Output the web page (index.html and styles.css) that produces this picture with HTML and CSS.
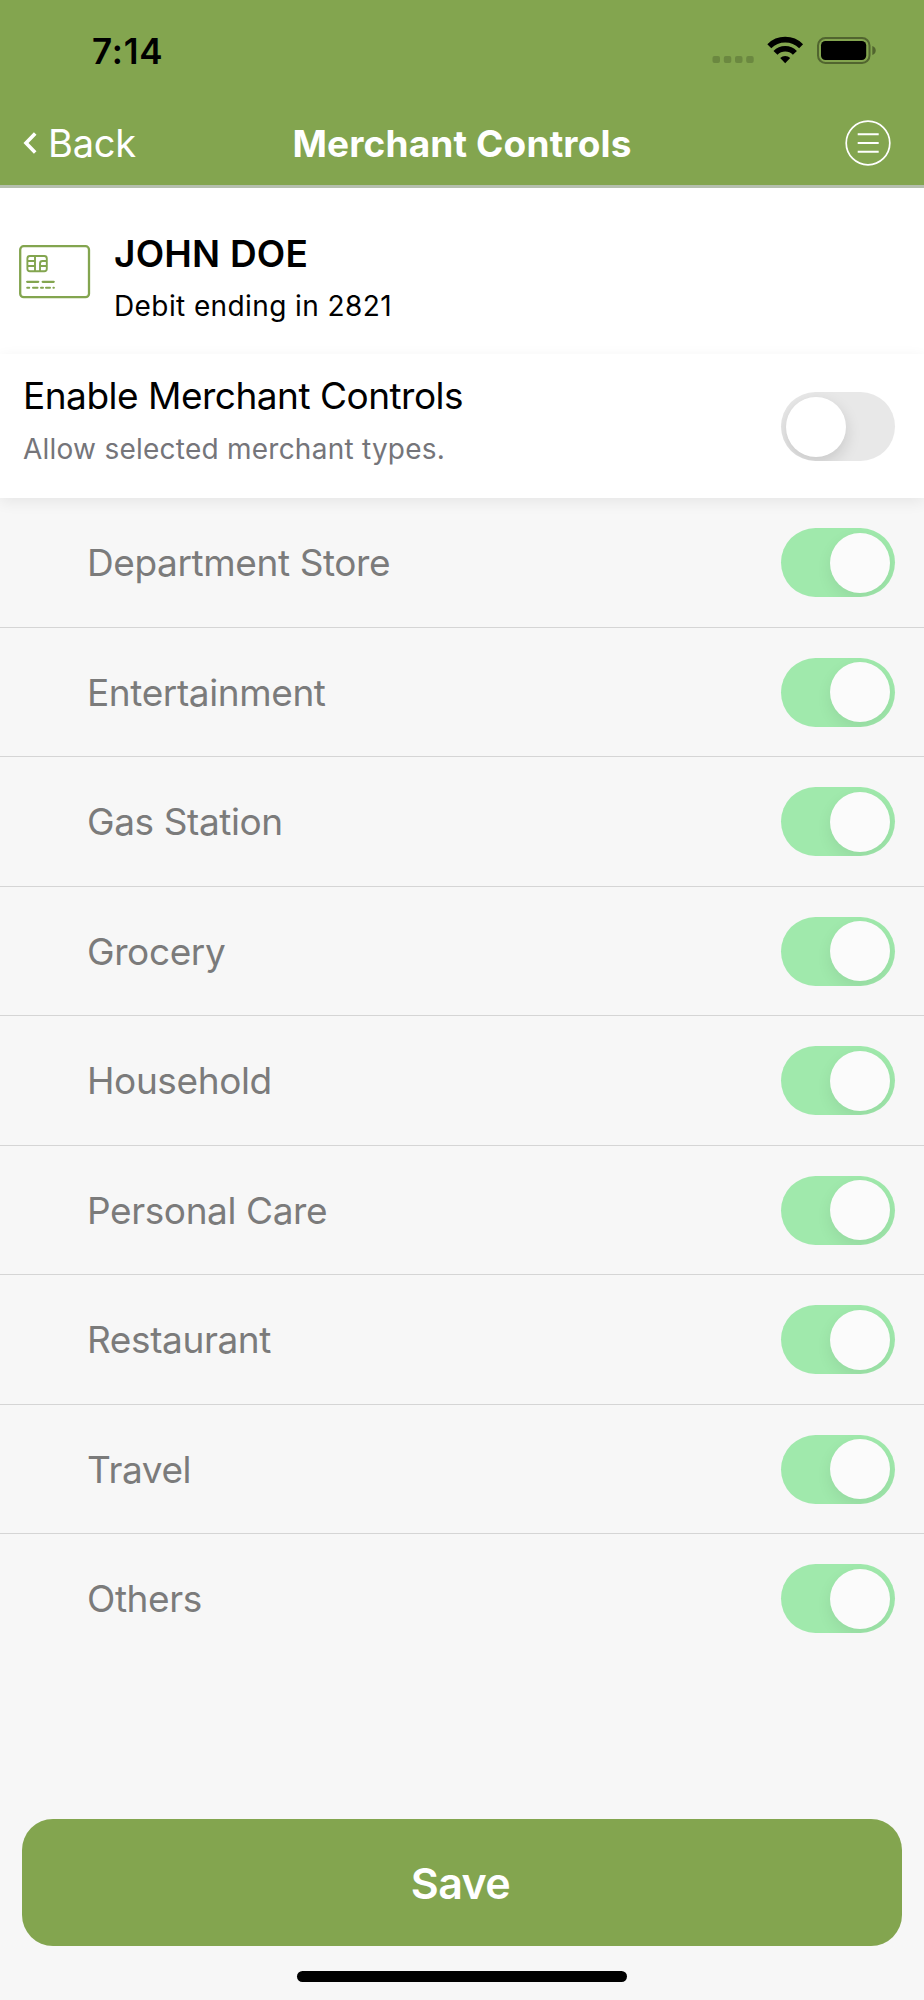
FILE: index.html
```
<!DOCTYPE html>
<html lang="en">
<head>
    <meta charset="UTF-8">
    <title>Merchant Controls</title>
    <link rel="stylesheet" href="styles.css">
</head>
<body>
<header class="header">
    <div class="status-bar">
        <span class="time">7:14</span>
        <svg class="status-icons" width="166" height="30" viewBox="710 35 166 30">
            <g fill="#6b8840">
                <rect x="712.5" y="56" width="7.5" height="7" rx="2"/>
                <rect x="723.8" y="56" width="7.5" height="7" rx="2"/>
                <rect x="735" y="56" width="7.5" height="7" rx="2"/>
                <rect x="746.2" y="56" width="7.5" height="7" rx="2"/>
            </g>
            <g fill="none" stroke="#000" stroke-width="5.6">
                <path d="M769.3 46.2a22.6 22.6 0 0 1 31.8 0"/>
                <path d="M775.5 52.9a13.5 13.5 0 0 1 19.4 0"/>
            </g>
            <path d="M785.2 63.2l-5-5.2a7.2 7.2 0 0 1 10 0z"/>
            <rect x="818" y="38" width="51.5" height="25" rx="7.5" fill="none" stroke="#51652f" stroke-width="2"/>
            <rect x="821" y="41" width="45.2" height="19" rx="4.5"/>
            <path d="M872.3 46q3.4 1.3 3.4 4.5t-3.4 4.5z" fill="#51652f"/>
        </svg>
    </div>
    <div class="nav-bar">
        <a class="back">
            <svg width="14" height="22" viewBox="0 0 14 22"><path d="M12.2 1.5L3 11l9.2 9.5" fill="none" stroke="#fff" stroke-width="3.6"/></svg>
            <span>Back</span>
        </a>
        <h1>Merchant Controls</h1>
        <svg class="menu" width="46" height="46" viewBox="0 0 46 46" fill="none" stroke="#fff">
            <circle cx="23" cy="23" r="21.8" stroke-width="1.7"/>
            <path d="M12.7 14.2h21M12.7 23h21M12.7 31.8h21" stroke-width="2"/>
        </svg>
    </div>
</header>

<section class="card-info">
    <svg width="72" height="54" viewBox="0 0 72 54" fill="none" stroke="#83a54f">
        <rect x="1.2" y="1.2" width="68.8" height="51" rx="3.5" stroke-width="2.3"/>
        <g stroke-width="1.9">
            <rect x="8.4" y="11" width="19.4" height="15.2" rx="2.5"/>
            <path d="M8 16h8M8 21h8M16 11v15M21 26v-7.5q0-2.5 2.5-2.5h4.5M21 21h7"/>
        </g>
        <path d="M8.2 36.8h11M23.7 36.8h11" stroke-width="2.3" stroke-linecap="round"/>
        <path d="M8.2 42.8h2M14 42.8h4.5M22 42.8h2M27 42.8h4M34.4 42.8h.5" stroke-width="2" stroke-linecap="round"/>
    </svg>
    <div>
        <h2>JOHN DOE</h2>
        <p>Debit ending in 2821</p>
    </div>
</section>

<section class="enable">
    <div>
        <h3>Enable Merchant Controls</h3>
        <p>Allow selected merchant types.</p>
    </div>
    <span class="toggle"></span>
</section>

<ul class="merchant-list">
    <li>Department Store <span class="toggle on"></span></li>
    <li>Entertainment <span class="toggle on"></span></li>
    <li>Gas Station <span class="toggle on"></span></li>
    <li>Grocery <span class="toggle on"></span></li>
    <li>Household <span class="toggle on"></span></li>
    <li>Personal Care <span class="toggle on"></span></li>
    <li>Restaurant <span class="toggle on"></span></li>
    <li>Travel <span class="toggle on"></span></li>
    <li>Others <span class="toggle on"></span></li>
</ul>

<footer class="footer">
    <button class="save">Save</button>
    <div class="home-indicator"></div>
</footer>
</body>
</html>
```

FILE: styles.css
```
* {
    box-sizing: border-box;
}

body {
    margin: 0;
    height: 2000px;
    display: flex;
    flex-direction: column;
    font-family: Inter, "Liberation Sans", sans-serif;
    background-color: #f7f7f7;
    color: #000;
}

h1, h2, h3, p {
    margin: 0;
    white-space: nowrap;
}

.header {
    height: 188px;
    background-color: #83a54f;
    border-bottom: 3px solid #b5bfae;
}

.status-bar {
    height: 100px;
    padding: 0 48px 0 92px;
    display: flex;
    justify-content: space-between;
    align-items: center;
}

.time {
    padding-top: 1px;
    font-size: 35px;
    font-weight: 600;
    line-height: 40px;
    letter-spacing: 0.8px;
}

.nav-bar {
    height: 86px;
    padding: 0 33px 0 23px;
    display: grid;
    grid-template-columns: 1fr auto 1fr;
    align-items: center;
    color: #fff;
}

.back {
    display: flex;
    align-items: center;
    gap: 11px;
    font-size: 38px;
    letter-spacing: -0.2px;
}

.nav-bar h1 {
    margin-left: 10px;
    font-size: 37px;
    font-weight: 700;
    letter-spacing: 0.15px;
}

.menu {
    justify-self: end;
}

.card-info {
    height: 166px;
    padding: 45px 19px 0;
    display: flex;
    gap: 23px;
    background: white;
}

.card-info svg {
    margin-top: 12px;
}

.card-info h2 {
    font-size: 37px;
    font-weight: 600;
    line-height: 42px;
    letter-spacing: 0.2px;
}

.card-info p {
    margin-top: 14px;
    font-size: 28px;
    line-height: 34px;
    letter-spacing: 0.4px;
}

.enable {
    height: 144px;
    padding: 20px 29px 0 23px;
    display: flex;
    justify-content: space-between;
    background: white;
    box-shadow: 0 4px 14px rgba(0,0,0,0.07);
}

.enable .toggle {
    margin-top: 18px;
}

.enable h3 {
    font-size: 37px;
    font-weight: 400;
    line-height: 44px;
    letter-spacing: -0.5px;
}

.enable p {
    margin-top: 14px;
    font-size: 28px;
    line-height: 34px;
    letter-spacing: 0.24px;
    color: #75757a;
}

.toggle {
    width: 114px;
    height: 69px;
    padding: 4.5px;
    display: flex;
    border-radius: 35px;
    background-color: #e8e8e8;
    overflow: hidden;
}

.toggle::after {
    content: "";
    width: 60px;
    height: 60px;
    border-radius: 50%;
    background: white;
    box-shadow: 0 6px 16px rgba(0,0,0,0.14);
}

.toggle.on {
    padding-right: 5px;
    justify-content: flex-end;
    background-color: #a0e9ac;
}

.toggle.on::after {
    background: #fbfbfb;
    box-shadow: 0 6px 16px rgba(0,0,0,0.07);
}

.merchant-list {
    list-style: none;
    margin: 0;
    padding: 0;
}

.merchant-list li {
    height: 129.5px;
    padding: 1px 29px 0 87px;
    display: flex;
    justify-content: space-between;
    align-items: center;
    border-bottom: 1px solid #d5d5d5;
    font-size: 37px;
    letter-spacing: -0.4px;
    color: #7b7b7b;
}

.merchant-list li:last-child {
    padding-top: 0;
    border-bottom: none;
}

.footer {
    margin-top: auto;
    padding: 0 22px 18px;
    display: flex;
    flex-direction: column;
    align-items: center;
    gap: 25px;
}

.save {
    width: 100%;
    height: 127px;
    padding: 0 3px 0 0;
    border: none;
    border-radius: 31px;
    background-color: #83a54f;
    color: white;
    font-family: inherit;
    font-size: 43px;
    font-weight: 600;
    letter-spacing: -0.6px;
}

.home-indicator {
    width: 330px;
    height: 11px;
    border-radius: 6px;
    background: black;
}
```
